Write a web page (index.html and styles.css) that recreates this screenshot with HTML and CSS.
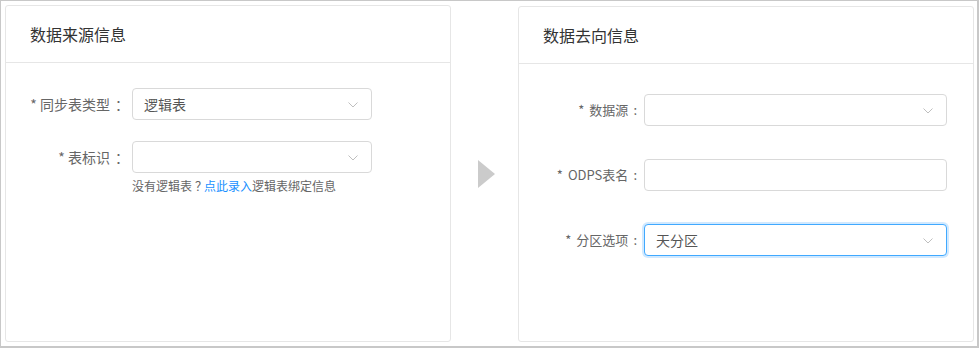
FILE: index.html
```html
<!DOCTYPE html>
<html lang="zh-CN">
<head>
  <meta charset="UTF-8" />
  <meta name="viewport" content="width=device-width, initial-scale=1.0"/>
  <title>数据同步配置</title>
  <link rel="stylesheet" href="styles.css">
</head>
<body>

<div class="frame">

  <div class="panel">
    <div class="panel-head">数据来源信息</div>
    <div class="panel-body src-body">
      <div class="form-row">
        <label class="form-label">* 同步表类型<span class="punct">：</span></label>
        <div class="select src-select">
          <span class="select-value">逻辑表</span>
          <svg class="chevron" width="10" height="6" viewBox="0 0 10 6"><polyline points="0.5,0.5 5,5 9.5,0.5" /></svg>
        </div>
      </div>
      <div class="form-row">
        <label class="form-label">* 表标识<span class="punct">：</span></label>
        <div class="select src-select">
          <span class="select-value"></span>
          <svg class="chevron" width="10" height="6" viewBox="0 0 10 6"><polyline points="0.5,0.5 5,5 9.5,0.5" /></svg>
        </div>
      </div>
      <div class="form-help">没有逻辑表<span class="punct-q">？</span><a href="#">点此录入</a>逻辑表绑定信息</div>
    </div>
  </div>

  <div class="flow">
    <div class="flow-arrow"></div>
  </div>

  <div class="panel panel-dst">
    <div class="panel-head">数据去向信息</div>
    <div class="panel-body dst-body">
      <div class="form-row">
        <label class="form-label small"><span class="star">*</span>数据源<span class="colon">:</span></label>
        <div class="select dst-select">
          <span class="select-value"></span>
          <svg class="chevron" width="10" height="6" viewBox="0 0 10 6"><polyline points="0.5,0.5 5,5 9.5,0.5" /></svg>
        </div>
      </div>
      <div class="form-row">
        <label class="form-label small"><span class="star">*</span>ODPS表名<span class="colon">:</span></label>
        <div class="select dst-select input"></div>
      </div>
      <div class="form-row">
        <label class="form-label small"><span class="star">*</span>分区选项<span class="colon">:</span></label>
        <div class="select dst-select focused">
          <span class="select-value">天分区</span>
          <svg class="chevron" width="10" height="6" viewBox="0 0 10 6"><polyline points="0.5,0.5 5,5 9.5,0.5" /></svg>
        </div>
      </div>
    </div>
  </div>

</div>

</body>
</html>
```

FILE: styles.css
```css
* { box-sizing: border-box; }
body {
  margin: 0;
  font-family: "Noto Sans CJK SC", "Microsoft YaHei", sans-serif;
  background: #fff;
  color: #333;
}

.frame {
  width: 979px;
  height: 348px;
  border: solid #c8c8c8;
  border-width: 1px 2px 2px 1px;
  padding: 4px 3px 4px 4px;
  display: grid;
  grid-template-columns: 446px 67px 1fr;
  background: #fff;
}

.panel {
  border: 1px solid #e6e6e6;
  border-radius: 3px;
  background: #fff;
}

.panel-dst {
  margin-top: 1px;
}

.panel-head {
  height: 57px;
  border-bottom: 1px solid #e6e6e6;
  padding-left: 24px;
  font-size: 16px;
  line-height: 56px;
  color: #333;
}

.src-body { padding-top: 25px; }
.dst-body { padding-top: 30px; }

.form-row {
  display: flex;
  align-items: center;
}

.src-body .form-row + .form-row { margin-top: 21px; }
.dst-body .form-row + .form-row { margin-top: 33px; }

.form-label {
  width: 118px;
  margin-right: 6px;
  text-align: right;
  font-size: 14px;
  line-height: 32px;
  color: #666;
  white-space: nowrap;
}

/* full-width punctuation sits centred in its cell on the original page */
.punct {
  padding-left: 5px;
  letter-spacing: -5px;
}

.punct-q {
  padding-left: 3px;
  letter-spacing: -3px;
}

.form-label.small {
  font-size: 13px;
  margin-right: 6px;
}

.star {
  margin-right: 5px;
}

.colon {
  margin-left: 5px;
}

.select {
  position: relative;
  height: 32px;
  border: 1px solid #d9d9d9;
  border-radius: 4px;
  padding-left: 11px;
  display: flex;
  align-items: center;
  background: #fff;
}

.src-select { width: 240px; margin-left: 2px; }
.dst-select { width: 303px; margin-left: 1px; }

.select.focused {
  border-color: #40a9ff;
  box-shadow: 0 0 0 2px rgba(24, 144, 255, 0.2);
}

.select-value {
  font-size: 14px;
  line-height: 20px;
  color: #555;
}

.chevron {
  position: absolute;
  right: 13px;
  top: 13px;
}

.chevron polyline {
  fill: none;
  stroke: #bfbfbf;
  stroke-width: 1;
}

.form-help {
  margin: 4px 0 0 126px;
  font-size: 12px;
  line-height: 18px;
  color: #666;
}

.form-help a {
  color: #1890ff;
  text-decoration: none;
}

.flow {
  display: flex;
  align-items: center;
  justify-content: center;
}

.flow-arrow {
  width: 0;
  height: 0;
  margin-left: 4px;
  border-left: 17px solid #cbcbcb;
  border-top: 14.5px solid transparent;
  border-bottom: 14.5px solid transparent;
}
```
